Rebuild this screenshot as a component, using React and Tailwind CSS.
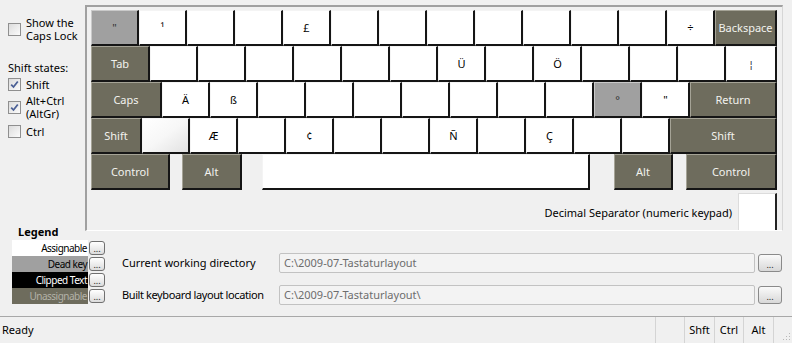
import React from "react";

const KEY_BASE = "h-[36px] shrink-0 flex items-center justify-center border-r-2 border-b-2 border-[#151515]";

function Key({ w = 48, label = "", kind = "white" }) {
  let cls = KEY_BASE;
  if (kind === "white") cls += " bg-white text-black border-t border-l border-t-[#f4f4f4] border-l-[#f4f4f4]";
  if (kind === "dead") cls += " bg-[#a0a0a0] text-[#333] border-t border-l border-t-[#c9c9c9] border-l-[#c9c9c9]";
  if (kind === "mod") cls += " bg-[#6e6c5d] text-[#f2f2ee] border-t border-l border-t-[#a5a396] border-l-[#a5a396]";
  if (kind === "fade") cls += " bg-gradient-to-br from-white via-[#f7f7f7] to-[#e2e2e2] border-t border-l border-t-[#f4f4f4] border-l-[#f4f4f4]";
  return (
    <div className={cls} style={{ width: w }}>
      <span className="leading-none">{label}</span>
    </div>
  );
}

function Checkbox({ checked }) {
  return (
    <div className="w-[13px] h-[13px] shrink-0 border border-[#8f8f8f] bg-gradient-to-br from-[#dcdcdc] to-[#fbfbfb] flex items-center justify-center">
      {checked && (
        <svg width="9" height="9" viewBox="0 0 9 9">
          <path d="M1.2 4.6 L3.5 7 L7.8 1.5" fill="none" stroke="#4a5f95" strokeWidth="1.8" />
        </svg>
      )}
    </div>
  );
}

function DotsButton({ small }) {
  return (
    <div
      className={
        small
          ? "w-[16px] h-[14px] ml-[1px] rounded-[3px] border border-[#707070] bg-gradient-to-b from-white to-[#dcdcdc] flex items-end justify-center text-[9px] leading-[9px] pb-[1px] text-[#222]"
          : "w-[24px] h-[18px] ml-[3px] rounded-[3px] border border-[#8a8a8a] bg-gradient-to-b from-[#fafafa] to-[#d8d8d8] flex items-end justify-center text-[9px] leading-[9px] pb-[2px] text-[#222]"
      }
    >
      ...
    </div>
  );
}

const LEGEND = [
  { label: "Assignable", cls: "bg-white text-black" },
  { label: "Dead key", cls: "bg-[#a0a0a0] text-black" },
  { label: "Clipped Text", cls: "bg-black text-white" },
  { label: "Unassignable", cls: "bg-[#6e6c5d] text-[#b3b2a8]" },
];

export default function App() {
  const blanks = (n) => Array.from({ length: n }, () => ({ label: "" }));

  const row1 = [
    { label: '"', kind: "dead" },
    { label: "¹" },
    ...blanks(2),
    { label: "£" },
    ...blanks(7),
    { label: "÷" },
  ];
  const row2 = [...blanks(6), { label: "Ü" }, { label: "" }, { label: "Ö" }, ...blanks(3)];
  const row3 = [{ label: "Ä" }, { label: "ß" }, ...blanks(7), { label: "°", kind: "dead" }, { label: '"' }];
  const row4 = [
    { label: "", kind: "fade" },
    { label: "Æ" },
    { label: "" },
    { label: "¢" },
    ...blanks(2),
    { label: "Ñ" },
    { label: "" },
    { label: "Ç" },
    ...blanks(2),
  ];

  return (
    <div className="w-[792px] h-[343px] bg-[#f0f0f0] flex flex-col overflow-hidden text-[11px] text-black font-['Noto_Sans',sans-serif]">
      {/* Main */}
      <div className="h-[316px] flex flex-col">
        <div className="h-[231px] flex">
          {/* Options */}
          <div className="w-[85px] shrink-0 flex flex-col pl-[8px] leading-[13px]">
            <div className="mt-[16px] flex items-center gap-[5px]">
              <Checkbox />
              <div>
                Show the
                <br />
                Caps Lock
              </div>
            </div>
            <div className="mt-[19px]">Shift states:</div>
            <div className="mt-[4px] flex items-center gap-[5px]">
              <Checkbox checked />
              <div>Shift</div>
            </div>
            <div className="mt-[3px] flex items-center gap-[5px]">
              <Checkbox checked />
              <div>
                Alt+Ctrl
                <br />
                (AltGr)
              </div>
            </div>
            <div className="mt-[5px] flex items-center gap-[5px]">
              <Checkbox />
              <div>Ctrl</div>
            </div>
          </div>

          {/* Keyboard */}
          <div className="mt-[5px] w-[698px] h-[226px] border-t-2 border-l-2 border-t-[#a0a0a0] border-l-[#a0a0a0] border-b border-r border-b-white border-r-[#d6d6d6] pl-[4px] pt-[3px] flex flex-col">
            <div className="flex">
              {row1.map((k, i) => (
                <Key key={i} {...k} />
              ))}
              <Key w={62} label="Backspace" kind="mod" />
            </div>
            <div className="flex">
              <Key w={59} label="Tab" kind="mod" />
              {row2.map((k, i) => (
                <Key key={i} {...k} />
              ))}
              <Key w={51} label={<span className="font-['DejaVu_Sans',sans-serif] text-[#3c4250]">¦</span>} />
            </div>
            <div className="flex">
              <Key w={71} label="Caps" kind="mod" />
              {row3.map((k, i) => (
                <Key key={i} {...k} />
              ))}
              <Key w={87} label="Return" kind="mod" />
            </div>
            <div className="flex">
              <Key w={51} label="Shift" kind="mod" />
              {row4.map((k, i) => (
                <Key key={i} {...k} />
              ))}
              <Key w={107} label="Shift" kind="mod" />
            </div>
            <div className="flex">
              <Key w={79} label="Control" kind="mod" />
              <div className="ml-[12px]">
                <Key w={60} label="Alt" kind="mod" />
              </div>
              <div className="ml-[20px]">
                <Key w={328} label="" />
              </div>
              <div className="ml-[24px]">
                <Key w={59} label="Alt" kind="mod" />
              </div>
              <div className="ml-[13px]">
                <Key w={91} label="Control" kind="mod" />
              </div>
            </div>
            <div className="mt-[3px] w-[686px] flex items-start justify-end">
              <div className="mt-[12px] mr-[6px]">Decimal Separator (numeric keypad)</div>
              <div className="w-[39px] h-[37px] bg-white border-r-2 border-r-[#222] border-l border-t border-l-[#dcdcdc] border-t-[#dcdcdc]"></div>
            </div>
          </div>
        </div>

        {/* Legend and paths */}
        <div className="flex flex-1">
          <div className="ml-[12px] -mt-[8px] w-[93px] flex flex-col">
            <div className="h-[17px] leading-[17px] pl-[6px] font-bold">Legend</div>
            {LEGEND.map((l) => (
              <div key={l.label} className="h-[16px] flex items-center">
                <div
                  className={`w-[76px] h-[16px] flex items-center justify-end pr-[1px] text-[10px] tracking-[-0.5px] leading-none ${l.cls}`}
                >
                  {l.label}
                </div>
                <DotsButton small />
              </div>
            ))}
          </div>

          <div className="ml-[17px] pt-[22px] flex flex-col gap-[12px]">
            <div className="h-[20px] flex items-center">
              <div className="w-[157px]">Current working directory</div>
              <div className="w-[476px] h-[20px] rounded-[2px] border border-[#c2c2c2] bg-[#f3f3f3] pl-[4px] flex items-center text-[#6d6d6d]">
                C:\2009-07-Tastaturlayout
              </div>
              <DotsButton />
            </div>
            <div className="h-[20px] flex items-center">
              <div className="w-[157px] tracking-[-0.4px]">Built keyboard layout location</div>
              <div className="w-[476px] h-[20px] rounded-[2px] border border-[#c2c2c2] bg-[#f3f3f3] pl-[4px] flex items-center text-[#6d6d6d]">
                C:\2009-07-Tastaturlayout\
              </div>
              <DotsButton />
            </div>
          </div>
        </div>
      </div>

      {/* Status bar */}
      <div className="h-[27px] border-t border-t-[#a8a8a8] flex items-center">
        <div className="flex-1 pl-[2px]">Ready</div>
        <div className="w-[29px] h-full border-l border-l-[#d4d4d4]"></div>
        <div className="w-[30px] h-full border-l border-l-[#d4d4d4] flex items-center justify-center">Shft</div>
        <div className="w-[29px] h-full border-l border-l-[#d4d4d4] flex items-center justify-center">Ctrl</div>
        <div className="w-[30px] h-full border-l border-l-[#d4d4d4] flex items-center justify-center">Alt</div>
        <div className="w-[19px] h-full border-l border-l-[#d4d4d4] flex items-end justify-end pb-[1px] pr-[1px]">
          <svg width="11" height="11" viewBox="0 0 11 11">
            {[
              [9, 1],
              [6, 4],
              [9, 4],
              [3, 7],
              [6, 7],
              [9, 7],
            ].map(([x, y], i) => (
              <rect key={i} x={x} y={y + 1} width="1" height="1" fill="#b8b8b8" />
            ))}
          </svg>
        </div>
      </div>
    </div>
  );
}
